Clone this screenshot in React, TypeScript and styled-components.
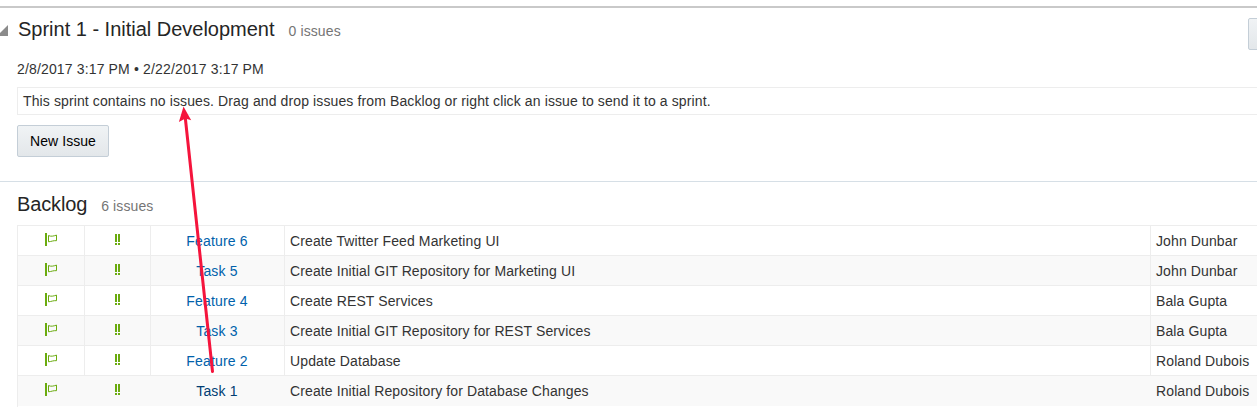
import React from 'react';
import styled, { createGlobalStyle } from 'styled-components';

const GlobalStyle = createGlobalStyle`
  *, *::before, *::after { box-sizing: border-box; }
  html, body { margin: 0; padding: 0; background: #fff; overflow: hidden; }
  body { font-family: "Liberation Sans", Arial, sans-serif; font-size: 14px; color: #333; letter-spacing: 0.115px; }
`;

const Page = styled.main`
  position: relative;
  width: 1257px;
  height: 407px;
  padding-top: 6px;
  overflow: hidden;
`;

const SprintSection = styled.section`
  height: 175px;
  border-top: 2px solid #c9c9c9;
`;

const SprintHeader = styled.header`
  display: flex;
  align-items: flex-start;
  height: 49px;
`;

const Disclosure = styled.svg`
  flex: none;
  width: 8px;
  height: 11px;
  margin: 17px 10px 0 0;
`;

const Title = styled.h2<{ $tight?: boolean }>`
  margin: 0;
  font-size: 20px;
  line-height: 24px;
  font-weight: 400;
  letter-spacing: ${p => (p.$tight ? '-0.14px' : '-0.01px')};
  color: #252525;
  white-space: nowrap;
`;

const Count = styled.span`
  margin-left: 14px;
  font-size: 14px;
  line-height: 24px;
  color: #757575;
  white-space: nowrap;
`;

const Heading = styled.div`
  display: flex;
  align-items: baseline;
  padding-top: 9px;
`;

const Button = styled.button`
  flex: none;
  height: 32px;
  padding: 0 12px;
  border: 1px solid #c4ced7;
  border-radius: 2px;
  background: linear-gradient(#f0f3f5, #e3e7ea);
  font: inherit;
  font-size: 14px;
  letter-spacing: 0.06px;
  color: #000;
  white-space: nowrap;
`;

const ActionButton = styled(Button)`
  width: 92px;
  margin: 10px -83px 0 auto;
`;

const SprintBody = styled.div`
  padding-left: 17px;
`;

const Dates = styled.p`
  margin: 0;
  height: 30px;
  line-height: 24px;
  letter-spacing: 0.15px;
`;

const EmptyNotice = styled.div`
  height: 28px;
  margin-bottom: 10px;
  padding-left: 5px;
  border: 1px solid #ededed;
  border-right: 0;
  line-height: 27px;
`;

const NewIssueButton = styled(Button)`
  display: block;
  width: 92px;
`;

const BacklogSection = styled.section`
  padding-left: 17px;
  border-top: 1px solid #d6dfe6;
`;

const BacklogHeading = styled(Heading)`
  height: 43px;
  padding-top: 10px;
`;

const IssueGrid = styled.div`
  border-left: 1px solid #ededed;
`;

const Row = styled.div<{ $shade: boolean; $dragged: boolean }>`
  display: grid;
  grid-template-columns: 67px 66px 134px 866px 1fr;
  height: ${p => (p.$dragged ? 32 : 30)}px;
  border-top: 1px solid #ededed;
  background: ${p => (p.$shade ? '#f9f9f9' : '#fff')};
  border-bottom: ${p => (p.$dragged ? '1px solid #fff' : '0')};
  --divider: ${p => (p.$dragged ? 'transparent' : '#ededed')};
`;

const Cell = styled.div`
  padding-left: 5px;
  border-right: 1px solid var(--divider);
  line-height: 30px;
  white-space: nowrap;
  &:last-child { border-right: 0; }
`;

const IconCell = styled(Cell)<{ $top: number }>`
  display: flex;
  justify-content: center;
  padding: ${p => p.$top}px 0 0;
`;

const KeyCell = styled(Cell)<{ $dragged: boolean }>`
  padding: 0 1px 0 0;
  text-align: center;
  letter-spacing: 0.18px;
  color: ${p => (p.$dragged ? '#003d73' : '#0061ab')};
`;

const DragArrow = styled.svg`
  position: absolute;
  top: 0;
  left: 0;
  width: 1257px;
  height: 407px;
  pointer-events: none;
`;

const issues = [
  { key: 'Feature 6', summary: 'Create Twitter Feed Marketing UI', owner: 'John Dunbar' },
  { key: 'Task 5', summary: 'Create Initial GIT Repository for Marketing UI', owner: 'John Dunbar' },
  { key: 'Feature 4', summary: 'Create REST Services', owner: 'Bala Gupta' },
  { key: 'Task 3', summary: 'Create Initial GIT Repository for REST Services', owner: 'Bala Gupta' },
  { key: 'Feature 2', summary: 'Update Database', owner: 'Roland Dubois' },
  { key: 'Task 1', summary: 'Create Initial Repository for Database Changes', owner: 'Roland Dubois' },
];

const FlagIcon = () => (
  <svg width="13" height="13" viewBox="0 0 13 13">
    <path d="M0 0h2v13H0z" fill="#6bab0f" />
    <path d="M3.5 2.5C6 3.8 8.5 3.1 11.5 2.1V7.7C8.5 7.3 6.5 8.6 3.5 8.8Z" fill="none" stroke="#6bab0f" strokeWidth="1" />
  </svg>
);

const PriorityIcon = () => (
  <svg width="5" height="11" viewBox="0 0 5 11">
    <path d="M0 0h2v8H0zM3 0h2v8H3zM0 9h2v2H0zM3 9h2v2H3z" fill="#6bab0f" />
  </svg>
);

export default function App() {
  return (
    <>
      <GlobalStyle />
      <Page>
        <SprintSection>
          <SprintHeader>
            <Disclosure viewBox="0 0 8 11">
              <path d="M8 0v11H-3z" fill="#8b8b8b" />
            </Disclosure>
            <Heading>
              <Title>Sprint 1 - Initial Development</Title>
              <Count>0 issues</Count>
            </Heading>
            <ActionButton aria-label="Sprint actions" />
          </SprintHeader>
          <SprintBody>
            <Dates>2/8/2017 3:17 PM • 2/22/2017 3:17 PM</Dates>
            <EmptyNotice>
              This sprint contains no issues. Drag and drop issues from Backlog or right click an issue to send it to a sprint.
            </EmptyNotice>
            <NewIssueButton>New Issue</NewIssueButton>
          </SprintBody>
        </SprintSection>
        <BacklogSection>
          <BacklogHeading>
            <Title $tight>Backlog</Title>
            <Count>6 issues</Count>
          </BacklogHeading>
          <IssueGrid>
            {issues.map((issue, i) => {
              const dragged = i === issues.length - 1;
              return (
                <Row key={issue.key} $shade={i % 2 === 1} $dragged={dragged}>
                  <IconCell $top={7}><FlagIcon /></IconCell>
                  <IconCell $top={8}><PriorityIcon /></IconCell>
                  <KeyCell $dragged={dragged}>{issue.key}</KeyCell>
                  <Cell>{issue.summary}</Cell>
                  <Cell>{issue.owner}</Cell>
                </Row>
              );
            })}
          </IssueGrid>
        </BacklogSection>
        <DragArrow viewBox="0 0 1257 407">
          <path d="M212.5 371.5L185.2 117" stroke="#f5143c" strokeWidth="3" strokeLinecap="round" fill="none" />
          <path d="M183.5 106.5L191.2 120.2L185.4 118.4L178.9 122Z" fill="#f5143c" />
        </DragArrow>
      </Page>
    </>
  );
}
